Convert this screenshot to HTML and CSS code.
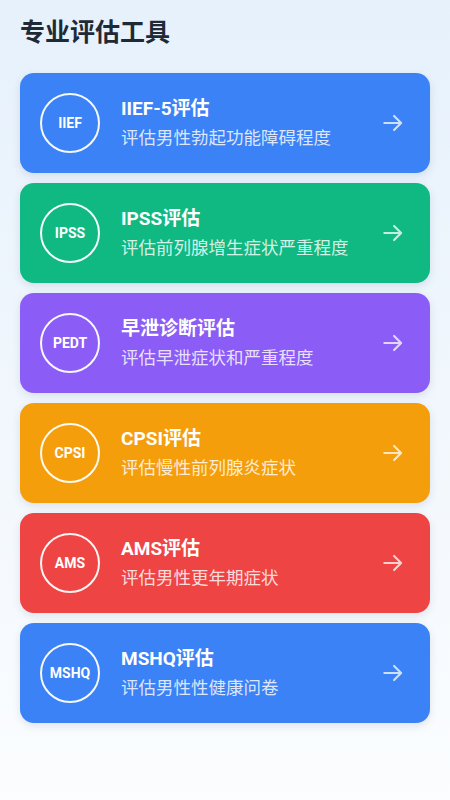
FILE: index.html
```html
<!DOCTYPE html>
<html lang="zh-CN">
<head>
    <meta charset="UTF-8">
    <meta name="viewport" content="width=device-width, initial-scale=1.0">
    <title>专业评估工具</title>
    <link rel="stylesheet" href="styles.css">
</head>
<body>
    <div class="container">
        <h1>专业评估工具</h1>

        <div class="tool-list">
            <div class="tool-card blue">
                <div class="badge">IIEF</div>
                <div class="info">
                    <div class="name">IIEF-5评估</div>
                    <div class="desc">评估男性勃起功能障碍程度</div>
                </div>
                <svg class="arrow" viewBox="0 0 24 24"><path d="M4 12h15M13 5.5l6.5 6.5-6.5 6.5"/></svg>
            </div>

            <div class="tool-card green">
                <div class="badge">IPSS</div>
                <div class="info">
                    <div class="name">IPSS评估</div>
                    <div class="desc">评估前列腺增生症状严重程度</div>
                </div>
                <svg class="arrow" viewBox="0 0 24 24"><path d="M4 12h15M13 5.5l6.5 6.5-6.5 6.5"/></svg>
            </div>

            <div class="tool-card purple">
                <div class="badge">PEDT</div>
                <div class="info">
                    <div class="name">早泄诊断评估</div>
                    <div class="desc">评估早泄症状和严重程度</div>
                </div>
                <svg class="arrow" viewBox="0 0 24 24"><path d="M4 12h15M13 5.5l6.5 6.5-6.5 6.5"/></svg>
            </div>

            <div class="tool-card orange">
                <div class="badge">CPSI</div>
                <div class="info">
                    <div class="name">CPSI评估</div>
                    <div class="desc">评估慢性前列腺炎症状</div>
                </div>
                <svg class="arrow" viewBox="0 0 24 24"><path d="M4 12h15M13 5.5l6.5 6.5-6.5 6.5"/></svg>
            </div>

            <div class="tool-card red">
                <div class="badge">AMS</div>
                <div class="info">
                    <div class="name">AMS评估</div>
                    <div class="desc">评估男性更年期症状</div>
                </div>
                <svg class="arrow" viewBox="0 0 24 24"><path d="M4 12h15M13 5.5l6.5 6.5-6.5 6.5"/></svg>
            </div>

            <div class="tool-card blue">
                <div class="badge">MSHQ</div>
                <div class="info">
                    <div class="name">MSHQ评估</div>
                    <div class="desc">评估男性性健康问卷</div>
                </div>
                <svg class="arrow" viewBox="0 0 24 24"><path d="M4 12h15M13 5.5l6.5 6.5-6.5 6.5"/></svg>
            </div>
        </div>
    </div>
</body>
</html>
```

FILE: styles.css
```css
html, body {
    margin: 0;
    height: 100%;
}
body {
    font-family: Roboto, "Noto Sans CJK SC", sans-serif;
    background: linear-gradient(180deg, #e6f1fc 0%, #f3f8fd 60%, #fbfdff 100%);
    color: #1f2937;
}
.container {
    padding: 15px 20px;
}
h1 {
    font-size: 25px;
    font-weight: 700;
    line-height: 36px;
    margin: 0 0 22px;
    color: #1f2a37;
}
.tool-list {
    display: flex;
    flex-direction: column;
    gap: 10px;
}
.tool-card {
    display: flex;
    align-items: center;
    height: 100px;
    box-sizing: border-box;
    padding: 0 24px 0 20px;
    border-radius: 14px;
    color: white;
    box-shadow: 0 3px 8px rgba(30, 60, 110, 0.12);
}
.blue { background: #3b82f6; }
.green { background: #10b981; }
.purple { background: #8b5cf6; }
.orange { background: #f59e0b; }
.red { background: #ef4444; }
.badge {
    width: 60px;
    height: 60px;
    box-sizing: border-box;
    border: 2px solid rgba(255, 255, 255, 0.95);
    border-radius: 50%;
    display: flex;
    align-items: center;
    justify-content: center;
    font-size: 14px;
    font-weight: 700;
    flex-shrink: 0;
}
.info {
    flex: 1;
    margin-left: 21px;
}
.name {
    font-size: 19px;
    font-weight: 700;
    line-height: 26px;
    margin-bottom: 4px;
}
.desc {
    font-size: 17.5px;
    line-height: 25px;
    color: rgba(255, 255, 255, 0.82);
}
.arrow {
    width: 26px;
    height: 26px;
    fill: none;
    stroke: rgba(255, 255, 255, 0.75);
    stroke-width: 2;
    stroke-linecap: round;
    stroke-linejoin: round;
}
```
